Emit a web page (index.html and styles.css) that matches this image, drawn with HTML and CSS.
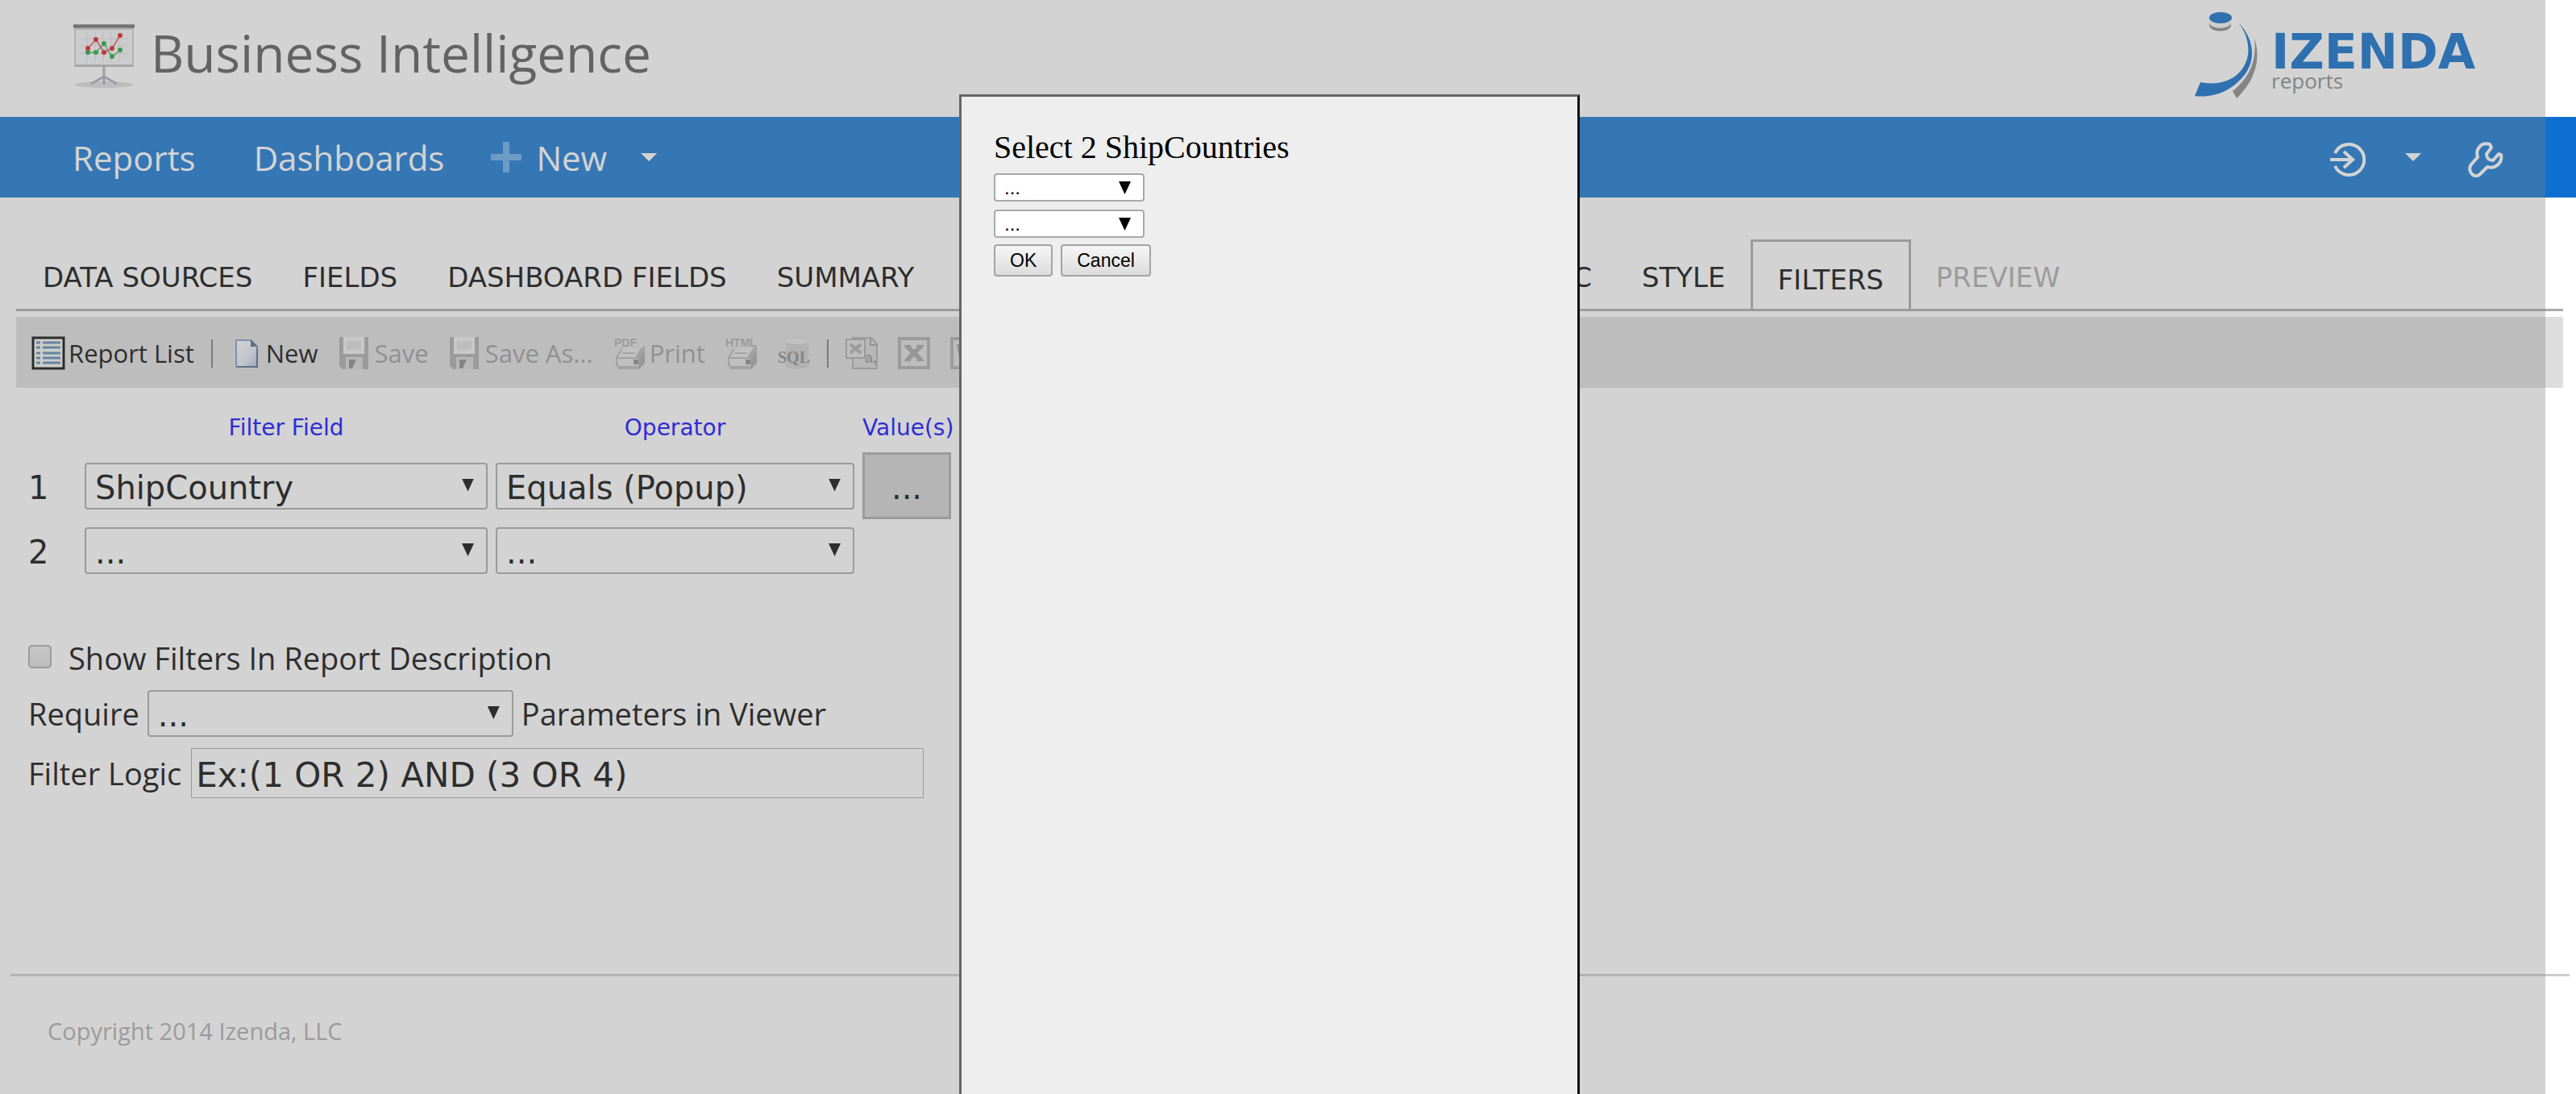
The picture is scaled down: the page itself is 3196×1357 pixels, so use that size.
FILE: index.html
```html
<!DOCTYPE html>
<html lang="en">
<head>
<meta charset="utf-8">
<title>Business Intelligence</title>
<link rel="stylesheet" href="styles.css">
</head>
<body>
<svg class="defs" width="0" height="0" aria-hidden="true">
  <defs>
    <linearGradient id="cap" x1="0" y1="0" x2="0" y2="1"><stop offset="0" stop-color="#aaa"/><stop offset=".4" stop-color="#555"/><stop offset="1" stop-color="#999"/></linearGradient>
    <linearGradient id="page" x1="0" y1="0" x2="1" y2="1"><stop offset="0" stop-color="#fff"/><stop offset=".6" stop-color="#e2e8f6"/><stop offset="1" stop-color="#aebfd8"/></linearGradient>
    <symbol id="disk" viewBox="0 0 40 40"><path d="M1 0h36v40H5l-4-4z" fill="#aaa"/><path d="M6 0h26v21H6z" fill="#eee"/><path d="M10 5h18v11H10z" fill="#ddd"/><path d="M9 25h21v15H9z" fill="#d4d4d4"/><path d="M13 28h9l-5 11h-4z" fill="#888"/></symbol>
    <symbol id="printer" viewBox="0 0 40 40"><path d="M10 14h24l5-3v22l-7 7H7l-4-5V25z" fill="#b4b4b4"/><path d="M12 14h22l-7 11H6z" fill="#e4e4e4"/><path d="M11 20h16" stroke="#bbb" stroke-width="2"/><path d="M5 27h26v9H6z" fill="#e0e0e0"/><path d="M25 28h6v6h-6z" fill="#888"/><path d="M32 25l7-7v14l-7 7z" fill="#a4a4a4"/></symbol>
  </defs>
</svg>

<header class="header">
  <a class="brand" href="#">
    <svg width="76" height="80" viewBox="0 0 76 80" aria-hidden="true">
      <ellipse cx="38" cy="75" rx="37" ry="4" fill="#ddd"/>
      <path d="M2 6h72v46H2z" fill="#f2f4f6" stroke="#ccc" stroke-width="2"/>
      <path d="M10 11h56v34H10z" fill="#f4f4f4"/>
      <path d="M17 9v38M27 9v38M37 9v38M47 9v38M57 9v38M8 18h60M8 27h60M8 36h60" stroke="#ddd"/>
      <path d="M0 0h76v5H0z" fill="url(#cap)"/><path d="M2 50h72v3H2z" fill="#bbb"/>
      <path d="M18 35h10l10-11 10 17 10-9" fill="none" stroke="#4fb868" stroke-width="1.500"/>
      <path d="M18 30l10-11 10 16 10-5 10-16" fill="none" stroke="#e04848" stroke-width="1.500"/>
      <g fill="#14a83c"><circle cx="18" cy="35" r="3"/><circle cx="28" cy="35" r="3"/><circle cx="38" cy="24" r="3"/><circle cx="48" cy="40" r="3"/><circle cx="58" cy="32" r="3"/></g>
      <g fill="#e01414"><circle cx="18" cy="30" r="3"/><circle cx="28" cy="19" r="3"/><circle cx="38" cy="35" r="3"/><circle cx="48" cy="30" r="3"/><circle cx="58" cy="14" r="3"/></g>
      <path d="M38 53v22M38 65l-16 9M38 65l16 9" fill="none" stroke="#aab" stroke-width="3"/>
    </svg>
    <span class="brand-name">Business Intelligence</span>
  </a>
  <a class="vendor" href="#">
    <svg width="80" height="108" viewBox="0 0 80 108" aria-hidden="true">
      <path d="M18 12v5c0 10 27 10 27 0v-5z" fill="#858585"/><path d="M18 10v4c0 9 27 9 27 0v-4z" fill="#f4f4f4"/>
      <ellipse cx="32" cy="8" rx="14" ry="7" fill="#0367c9"/>
      <path d="M54 14C74 34 77 61 60 81 46 98 24 108 0 105l7-17c19 4 38 0 50-14 13-15 13-40-3-60z" fill="#0367c9"/>
      <path d="M74 33c9 28 0 53-22 75l-5-9c21-17 30-37 27-66z" fill="#888"/>
    </svg>
    <span class="vendor-text"><span class="vendor-name">IZENDA</span><span class="vendor-sub">reports</span></span>
  </a>
</header>

<nav class="nav">
  <a href="#">Reports</a>
  <a href="#">Dashboards</a>
  <a class="nav-new" href="#"><span class="plus"></span>New<span class="caret"></span></a>
  <a class="nav-login" href="#" aria-label="Log in">
    <svg width="44" height="44" viewBox="0 0 44 44" fill="none" stroke="#fff" stroke-width="4" aria-hidden="true"><path d="M6 14A19 19 0 1 1 6 30M0 22h27M17 12l11 10-11 10"/></svg>
    <span class="caret"></span>
  </a>
  <a class="nav-tools" href="#" aria-label="Settings">
    <svg width="44" height="44" viewBox="0 0 44 44" fill="none" stroke="#fff" stroke-width="4" stroke-linejoin="round" aria-hidden="true"><path d="M27 3C16 0 9 9 12 19L4 28C1 32 2 37 5 40s8 3 11-1l8-8c11 3 19-6 17-15l-3-1-7 8c-5 0-8-3-8-8l6-8z"/></svg>
  </a>
</nav>

<main class="main">
  <ul class="tabs">
    <li><a href="#">DATA SOURCES</a></li>
    <li><a href="#">FIELDS</a></li>
    <li><a href="#">DASHBOARD FIELDS</a></li>
    <li><a href="#">SUMMARY</a></li>
    <li class="tab-misc"><a href="#">MISC</a></li>
    <li><a href="#">STYLE</a></li>
    <li class="active"><a href="#">FILTERS</a></li>
    <li class="disabled"><a href="#">PREVIEW</a></li>
  </ul>

  <div class="toolbar">
    <button type="button"><svg width="40" height="40" viewBox="0 0 40 40" aria-hidden="true"><path d="M1 1h38v38H1z" fill="#f4f6ee" stroke="#000" stroke-width="3"/><path d="M5 7h5M5 13h5M5 20h5M5 26h5M5 32h5M13 7h22M13 13h22M13 20h22M13 26h22M13 32h22" stroke="#5584b4" stroke-width="3"/></svg>Report List</button>
    <span class="sep"></span>
    <button type="button"><svg width="40" height="40" viewBox="0 0 40 40" aria-hidden="true"><path d="M8 4h18l8 8v25H8z" fill="url(#page)" stroke="#7d9cc8" stroke-width="2"/><path d="M26 3v9h9z" fill="#47648a"/><path d="M9 37h25V14" fill="none" stroke="#4c6888" stroke-width="2"/></svg>New</button>
    <button type="button" disabled><svg width="40" height="40" aria-hidden="true"><use href="#disk"/></svg>Save</button>
    <button type="button" disabled><svg width="40" height="40" aria-hidden="true"><use href="#disk"/></svg>Save As...</button>
    <button type="button" disabled><svg width="40" height="40" aria-hidden="true"><use href="#printer"/><text class="tag" x="1" y="12">PDF</text></svg>Print</button>
    <button type="button" disabled aria-label="Print HTML"><svg width="40" height="40" aria-hidden="true"><use href="#printer"/><text class="tag" x="0" y="12">HTML</text></svg></button>
    <button type="button" disabled aria-label="SQL"><svg width="40" height="40" aria-hidden="true"><path d="M10 4c0-5 28-5 28 0v32c0 5-28 5-28 0z" fill="#ccc"/><ellipse cx="24" cy="5" rx="14" ry="4" fill="#e4e4e4"/><text class="sql" x="0" y="32">SQL</text></svg></button>
    <span class="sep"></span>
    <button type="button" disabled aria-label="Export to CSV"><svg width="40" height="40" viewBox="0 0 40 40" aria-hidden="true"><path d="M9 1h23l7 8v30H9z" fill="#d4d4d4" stroke="#aaa" stroke-width="2"/><path d="M1 3h23v23H1z" fill="#ddd" stroke="#aaa" stroke-width="2"/><path d="M6 9l13 11M19 9L6 20" stroke="#aaa" stroke-width="4"/><path d="M31 2v8h8" fill="none" stroke="#999" stroke-width="2"/><text class="tag csv" x="24" y="32">a,</text></svg></button>
    <button type="button" disabled aria-label="Export to Excel"><svg width="40" height="40" viewBox="0 0 40 40" aria-hidden="true"><path d="M2 2h36v36H2z" fill="#ddd" stroke="#aaa" stroke-width="4"/><path d="M11 11l18 18M29 11L11 29" stroke="#a2a2a2" stroke-width="6"/><path d="M8 11h8M23 11h9M8 29h8M23 29h9" stroke="#a2a2a2" stroke-width="2"/></svg></button>
    <button type="button" disabled aria-label="Export to Word"><svg width="40" height="40" viewBox="0 0 40 40" aria-hidden="true"><path d="M2 2h36v36H2z" fill="#ddd" stroke="#aaa" stroke-width="4"/><path d="M8 11h8M10 11l4 18 6-12 6 12 4-18" fill="none" stroke="#a2a2a2" stroke-width="4"/></svg></button>
  </div>

  <table class="filters">
    <thead><tr><td></td><th>Filter Field</th><th>Operator</th><th>Value(s)</th></tr></thead>
    <tbody>
      <tr>
        <td class="num">1</td>
        <td><span class="select field"><select aria-label="Filter field 1"><option>ShipCountry</option></select></span></td>
        <td><span class="select operator"><select aria-label="Operator 1"><option>Equals (Popup)</option></select></span></td>
        <td><button class="pick" type="button">...</button></td>
      </tr>
      <tr>
        <td class="num">2</td>
        <td><span class="select field"><select aria-label="Filter field 2"><option>...</option></select></span></td>
        <td><span class="select operator"><select aria-label="Operator 2"><option>...</option></select></span></td>
        <td></td>
      </tr>
    </tbody>
  </table>

  <div class="options">
    <label class="option show"><input type="checkbox">Show Filters In Report Description</label>
    <div class="option require"><label for="require">Require</label><span class="select"><select id="require"><option>...</option></select></span>Parameters in Viewer</div>
    <div class="option logic"><label for="logic">Filter Logic</label><input id="logic" type="text" value="Ex:(1 OR 2) AND (3 OR 4)"></div>
  </div>
</main>

<footer class="footer">Copyright 2014 Izenda, LLC</footer>

<div class="overlay"></div>
<div class="popup" role="dialog" aria-labelledby="popup-title">
  <div id="popup-title">Select 2 ShipCountries</div>
  <span class="select small"><select aria-label="Country 1"><option>...</option></select></span>
  <span class="select small"><select aria-label="Country 2"><option>...</option></select></span>
  <div class="popup-buttons"><button type="button">OK</button><button type="button">Cancel</button></div>
</div>
</body>
</html>
```
FILE: styles.css
```css
* { box-sizing: border-box; }
body { margin: 0; background: #fff; color: #000; font-family: "Open Sans", "Noto Sans", sans-serif; font-size: 38px; }
a { color: inherit; text-decoration: none; }
button, input, select { font: inherit; color: inherit; margin: 0; }
.defs { position: absolute; }

.header { display: flex; justify-content: space-between; align-items: flex-start; height: 145px; padding: 14px 77px 0 91px; }
.brand { display: flex; align-items: center; gap: 20px; color: #535353; padding-top: 2px; }
.brand svg { margin-top: 8px; }
.brand-name { font-size: 64px; line-height: 100px; }
.vendor { display: flex; gap: 15px; color: #0367c9; }
.vendor-text { display: flex; flex-direction: column; padding-top: 24px; width: 301px; }
.vendor-name { font: bold 60px/52px "DejaVu Sans", sans-serif; }
.vendor-sub { color: #858585; font-size: 26px; line-height: 20px; }

.nav { display: flex; align-items: center; height: 100px; padding: 0 90px; background: #0d70d0; color: #fff; font-size: 42px; gap: 72px; }
.nav a { display: flex; align-items: center; }
.nav-new { margin-left: -14px; }
.plus { width: 38px; height: 38px; margin-right: 18px; background: linear-gradient(#64a9ea, #64a9ea) center / 38px 8px no-repeat, linear-gradient(#64a9ea, #64a9ea) center / 8px 38px no-repeat; }
.caret { width: 20px; height: 10px; margin-left: 42px; background: #fff; clip-path: polygon(0 0, 100% 0, 50% 100%); }
.nav-login { margin-left: auto; }
.nav-login .caret { margin-left: 49px; }
.nav-tools { margin-left: -14px; }
.nav-login svg, .nav-tools svg { margin-top: 5px; }

.main { padding: 55px 16px 0 20px; }
.tabs { display: flex; align-items: flex-end; margin: 0; padding: 0 2px; list-style: none; height: 86px; font: 34px/40px "DejaVu Sans", sans-serif; border-bottom: 3px solid #a9a9a9; }
.tabs li { height: 86px; padding: 27px 31px 0; white-space: nowrap; }
.tabs li.active { border: 3px solid #a9a9a9; border-bottom: 0; background: #fff; }
.tabs li.disabled { color: #aaa; }
.tabs .tab-misc { margin-left: 694px; }

.toolbar { display: flex; align-items: center; gap: 25px; height: 88px; margin-top: 7px; padding: 2px 20px 0; background: #ddd; font-size: 31px; }
.toolbar button { display: flex; align-items: center; gap: 5px; padding: 0; border: 0; background: none; line-height: 40px; white-space: nowrap; }
.toolbar button:disabled { color: #999; }
.toolbar svg { overflow: visible; }
.sep { width: 2px; height: 35px; margin: 0 -4px; background: #777; }
.tag { font: bold 14px "Liberation Sans", sans-serif; fill: #aaa; }
.csv { font-size: 18px; fill: #999; }
.sql { font: bold 20px "Liberation Serif", serif; fill: #888; }

.filters { border-collapse: collapse; margin-top: 25px; font: 40px/48px "DejaVu Sans", sans-serif; }
.filters td, .filters th { padding: 5px; }
.filters th { font-size: 28px; font-weight: normal; line-height: 40px; color: #00f; max-width: 120px; white-space: nowrap; }
.filters .num { width: 80px; padding: 7px 28px 3px 15px; }
.select { display: block; position: relative; }
.select::after { content: ""; position: absolute; right: 17px; top: 20px; width: 15px; height: 16px; background: #000; clip-path: polygon(0 0, 100% 0, 50% 100%); pointer-events: none; }
.select select { display: block; appearance: none; width: 100%; height: 58px; padding: 4px 11px 0; border: 2px solid #a9a9a9; border-radius: 4px; background: #fff; font: 40px/48px "DejaVu Sans", sans-serif; }
.field { width: 500px; }
.operator { width: 445px; }
.pick { display: block; width: 110px; height: 83px; padding: 4px 0 0; border: 3px solid #a9a9a9; background: #d1d1d1; }

.options { padding: 70px 0 0 15px; }
.option { display: flex; align-items: center; }
.show { height: 58px; gap: 21px; }
.show input { appearance: none; width: 29px; height: 29px; margin-bottom: 4px; border: 2px solid #a9a9a9; border-radius: 5px; background: linear-gradient(#ededed, #dcdcdc); }
.require { gap: 10px; height: 58px; margin-top: 11px; }
.require .select { width: 454px; }
.logic { gap: 12px; height: 62px; margin-top: 14px; }
.logic input { width: 909px; height: 62px; padding: 4px 5px 0; border: 1px solid #a9a9a9; background: #fff; font: 42px/48px "DejaVu Sans", sans-serif; }

.footer { margin: 218px 8px 0 13px; padding: 48px 46px; border-top: 3px solid #ccc; color: #aaa; font-size: 29px; line-height: 40px; }

.overlay { position: fixed; inset: 0 38px 0 0; background: rgba(128, 128, 128, .35); }
.popup { position: fixed; left: calc(50% - 408px); top: 117px; bottom: -3px; width: 770px; padding: 40px; border: 3px solid; border-color: #666 #111 #111 #666; background: #eee; font: 40px/46px "Liberation Serif", serif; }
#popup-title { margin-bottom: 9px; }
.small { width: 187px; margin-bottom: 10px; }
.small select { height: 35px; padding: 0 11px; font: 24px/28px "Liberation Sans", sans-serif; }
.small::after { top: 10px; }
.popup-buttons { display: flex; gap: 10px; margin-top: -2px; }
.popup-buttons button { height: 40px; padding: 0 18px; border: 2px solid #a3a3a3; border-radius: 4px; background: linear-gradient(#f6f6f6, #dcdcdc); font: 23px/30px "Liberation Sans", sans-serif; }
```
